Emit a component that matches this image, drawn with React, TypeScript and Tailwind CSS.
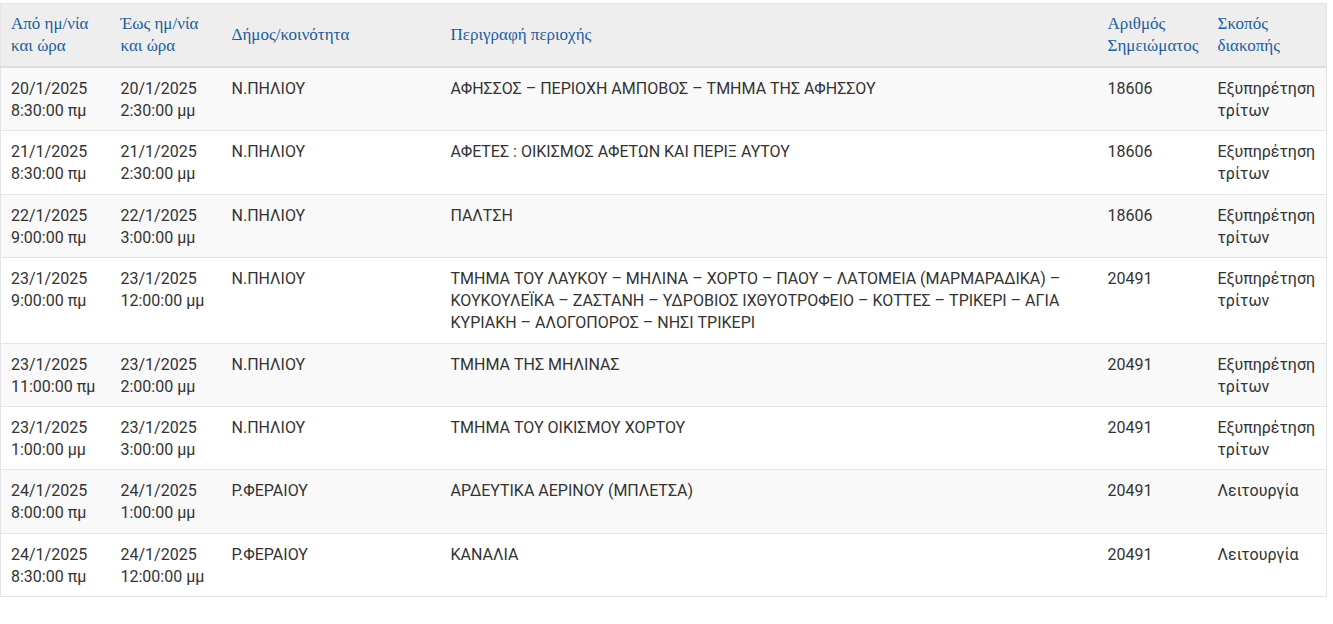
import React from "react";

type Row = { from: [string, string]; to: [string, string]; dim: string; desc: string; num: string; purpose: string };

const rows: Row[] = [
  { from: ["20/1/2025", "8:30:00 πμ"], to: ["20/1/2025", "2:30:00 μμ"], dim: "Ν.ΠΗΛΙΟΥ", desc: "ΑΦΗΣΣΟΣ – ΠΕΡΙΟΧΗ ΑΜΠΟΒΟΣ – ΤΜΗΜΑ ΤΗΣ ΑΦΗΣΣΟΥ", num: "18606", purpose: "Εξυπηρέτηση τρίτων" },
  { from: ["21/1/2025", "8:30:00 πμ"], to: ["21/1/2025", "2:30:00 μμ"], dim: "Ν.ΠΗΛΙΟΥ", desc: "ΑΦΕΤΕΣ : ΟΙΚΙΣΜΟΣ ΑΦΕΤΩΝ ΚΑΙ ΠΕΡΙΞ ΑΥΤΟΥ", num: "18606", purpose: "Εξυπηρέτηση τρίτων" },
  { from: ["22/1/2025", "9:00:00 πμ"], to: ["22/1/2025", "3:00:00 μμ"], dim: "Ν.ΠΗΛΙΟΥ", desc: "ΠΑΛΤΣΗ", num: "18606", purpose: "Εξυπηρέτηση τρίτων" },
  { from: ["23/1/2025", "9:00:00 πμ"], to: ["23/1/2025", "12:00:00 μμ"], dim: "Ν.ΠΗΛΙΟΥ", desc: "ΤΜΗΜΑ ΤΟΥ ΛΑΥΚΟΥ – ΜΗΛΙΝΑ – ΧΟΡΤΟ – ΠΑΟΥ – ΛΑΤΟΜΕΙΑ (ΜΑΡΜΑΡΑΔΙΚΑ) – ΚΟΥΚΟΥΛΕΪΚΑ – ΖΑΣΤΑΝΗ – ΥΔΡΟΒΙΟΣ ΙΧΘΥΟΤΡΟΦΕΙΟ – ΚΟΤΤΕΣ – ΤΡΙΚΕΡΙ – ΑΓΙΑ ΚΥΡΙΑΚΗ – ΑΛΟΓΟΠΟΡΟΣ – ΝΗΣΙ ΤΡΙΚΕΡΙ", num: "20491", purpose: "Εξυπηρέτηση τρίτων" },
  { from: ["23/1/2025", "11:00:00 πμ"], to: ["23/1/2025", "2:00:00 μμ"], dim: "Ν.ΠΗΛΙΟΥ", desc: "ΤΜΗΜΑ ΤΗΣ ΜΗΛΙΝΑΣ", num: "20491", purpose: "Εξυπηρέτηση τρίτων" },
  { from: ["23/1/2025", "1:00:00 μμ"], to: ["23/1/2025", "3:00:00 μμ"], dim: "Ν.ΠΗΛΙΟΥ", desc: "ΤΜΗΜΑ ΤΟΥ ΟΙΚΙΣΜΟΥ ΧΟΡΤΟΥ", num: "20491", purpose: "Εξυπηρέτηση τρίτων" },
  { from: ["24/1/2025", "8:00:00 πμ"], to: ["24/1/2025", "1:00:00 μμ"], dim: "Ρ.ΦΕΡΑΙΟΥ", desc: "ΑΡΔΕΥΤΙΚΑ ΑΕΡΙΝΟΥ (ΜΠΛΕΤΣΑ)", num: "20491", purpose: "Λειτουργία" },
  { from: ["24/1/2025", "8:30:00 πμ"], to: ["24/1/2025", "12:00:00 μμ"], dim: "Ρ.ΦΕΡΑΙΟΥ", desc: "ΚΑΝΑΛΙΑ", num: "20491", purpose: "Λειτουργία" },
];

const thBase = "text-left font-normal px-[10px] py-[9px] border-b-2 border-[#dddddd]";
const thTop = thBase + " align-top";
const thMid = thBase + " align-middle";
const td = "align-top px-[10px] pt-[10px] pb-[8.4px] border-t border-[#e4e4e4]";

export default function App() {
  return (
    <div className="bg-white w-[1333px] h-[624px] pt-[3px]">
      <table
        className="table-fixed border-collapse w-[1326px] border border-[#e4e4e4] text-[16px] leading-[22px] text-[#333333]"
        style={{ fontFamily: "Roboto, 'Noto Sans', sans-serif" }}
      >
        <colgroup>
          <col className="w-[110px]" />
          <col className="w-[111px]" />
          <col className="w-[219px]" />
          <col className="w-[657px]" />
          <col className="w-[110px]" />
          <col className="w-[119px]" />
        </colgroup>
        <thead>
          <tr className="bg-[#eeeeee] text-[#1d5ca0] text-[17px]" style={{ fontFamily: "'Liberation Serif', 'DejaVu Serif', serif" }}>
            <th className={thTop}>Από ημ/νία<br />και ώρα</th>
            <th className={thTop}>Έως ημ/νία<br />και ώρα</th>
            <th className={thMid}>Δήμος/κοινότητα</th>
            <th className={thMid}>Περιγραφή περιοχής</th>
            <th className={thTop}>Αριθμός<br />Σημειώματος</th>
            <th className={thTop}>Σκοπός<br />διακοπής</th>
          </tr>
        </thead>
        <tbody>
          {rows.map((r, i) => (
            <tr key={i} className={i % 2 === 0 ? "bg-[#f9f9f9]" : "bg-white"}>
              <td className={td}>{r.from[0]}<br />{r.from[1]}</td>
              <td className={td}>{r.to[0]}<br />{r.to[1]}</td>
              <td className={td}>{r.dim}</td>
              <td className={td}>{r.desc}</td>
              <td className={td}>{r.num}</td>
              <td className={td}>{r.purpose}</td>
            </tr>
          ))}
        </tbody>
      </table>
    </div>
  );
}
